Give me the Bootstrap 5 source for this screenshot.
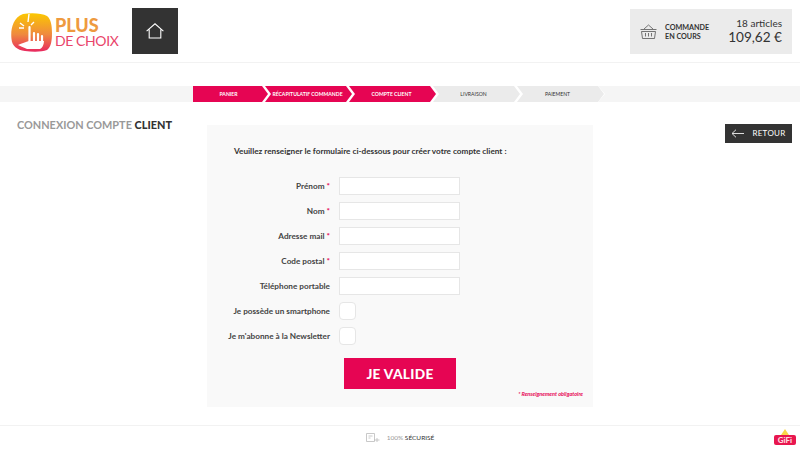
<!DOCTYPE html>
<html lang="fr">
<head>
    <meta charset="UTF-8">
    <meta name="viewport" content="width=device-width, initial-scale=1.0">
    <title>Plus de choix</title>
    <link rel="stylesheet" href="https://cdn.jsdelivr.net/npm/bootstrap@5.3.3/dist/css/bootstrap.min.css">
    <style>
        body { font-family: Lato, "Liberation Sans", sans-serif; color: #333; background: #fff; overflow: hidden; }
        .top-head { height: 63px; border-bottom: 1px solid #f2f2f2; padding: 8px 8px 0 11px; }
        .logo-icon { margin-top: 5px; }
        .logo-words { margin-left: 3px; margin-top: 8px; width: 77px; }
        .logo-plus { font-size: 18px; font-weight: 900; line-height: 18px; color: #ee9a3f; }
        .logo-choix { font-size: 14px; line-height: 14px; color: #e9446a; letter-spacing: -.4px; white-space: nowrap; }
        .home-btn { width: 46px; height: 46px; background: #333; }
        .cart-box { width: 162px; height: 45px; margin-top: 1px; background: #ebebeb; padding: 0 10px; }
        .cart-label { font-size: 7.2px; line-height: 9px; font-weight: 700; margin-left: 8px; color: #333; }
        .cart-count { font-size: 10px; line-height: 12px; }
        .cart-total { font-size: 13.6px; line-height: 17px; }
        .steps-bar { height: 16px; margin-top: 23px; }
        .bar-start { width: 193px; background: #f5f5f5; }
        .bar-end { flex: 1; margin-left: -3px; background: #f5f5f5; clip-path: polygon(0 0, 100% 0, 100% 100%, 0 100%, 7px 50%); }
        .step-item { width: 87px; margin-right: -3px; font-size: 5.1px; line-height: 16px; text-align: center; padding-right: 2px; text-transform: uppercase;
            clip-path: polygon(0 0, calc(100% - 6px) 0, 100% 50%, calc(100% - 6px) 100%, 0 100%, 6px 50%); }
        .step-item.first-step { width: 75px; padding-right: 4px; clip-path: polygon(0 0, calc(100% - 6px) 0, 100% 50%, calc(100% - 6px) 100%, 0 100%); }
        .step-done { background: #e60553; color: #fff; font-weight: 700; }
        .step-todo { background: #ebebeb; color: #333; padding-right: 6px; }
        .page-main { height: 323px; }
        .side-title { width: 207px; padding: 16px 0 0 17px; font-size: 10.9px; line-height: 14px; font-weight: 700; color: #999; }
        .side-title b { color: #333; }
        .form-panel { width: 386px; height: 282px; margin-top: 23px; background: #f9f9f9; padding: 20px 10px 0 0; }
        .form-intro { font-size: 8.2px; line-height: 12px; font-weight: 700; padding-left: 27px; margin-bottom: 20px; }
        .form-line { height: 18px; margin-bottom: 7px; }
        .form-line label { width: 125px; padding-right: 2px; text-align: right; font-size: 8.2px; font-weight: 700; color: #444; margin: 0 7px 0 0; white-space: nowrap; }
        .form-line label span { color: #e60553; }
        .field-text { width: 121px; height: 18px; background: #fff; border: 1px solid #e6e6e6; }
        .field-check { width: 17px; height: 18px; background: #fff; border: 1px solid #e6e6e6; border-radius: 4px; }
        .submit-btn { width: 112px; height: 31px; margin: 13px 0 0 137px; background: #e60553; color: #fff; font-size: 13.7px; font-weight: 900; line-height: 31px; border: 0; border-radius: 0; padding: 0; letter-spacing: .3px; }
        .submit-btn:hover { background: #e60553; color: #fff; }
        .need-note { font-size: 5.5px; font-style: italic; font-weight: 700; color: #e60553; text-align: right; margin-top: 1px; line-height: 8px; }
        .back-wrap { flex: 1; padding: 22px 8px 0 0; }
        .back-btn { width: 67px; height: 19px; background: #333; color: #fff; font-size: 8px; line-height: 19px; border: 0; border-radius: 0; padding: 0; letter-spacing: .3px; gap: 8px; }
        .back-btn:hover { background: #333; color: #fff; }
        .page-foot { height: 25px; border-top: 1px solid #f2f2f2; }
        .safe-text { font-size: 6.5px; margin-left: 7px; color: #333; }
        .safe-text em { font-style: normal; color: #999; }
        .gifi-mark { right: 4px; bottom: 5px; }
    </style>
</head>
<body>
    <header class="top-head d-flex align-items-start">
        <svg class="logo-icon" width="41" height="39" viewBox="0 0 41 39">
            <defs>
                <linearGradient id="logoGrad" x1="0" y1="0" x2="0" y2="1">
                    <stop offset="0" stop-color="#fbc800"/>
                    <stop offset=".55" stop-color="#ef8a3f"/>
                    <stop offset="1" stop-color="#e8285f"/>
                </linearGradient>
            </defs>
            <path d="M12 1C20-.5 31 0 36 3c4 3 5 10 5 17 0 8-1 14-5 17-5 2-14 2-22 1C6 37 1 33 .5 26-.5 18 1 5 12 1z" fill="url(#logoGrad)"/>
            <path d="M7 32c4-2 8-3 11-4h15c0 4-2 7-4 8H16c-4-2-7-3-9-4z" fill="#fff"/>
            <path d="M18.500 14v16M23 20v10M27 21v9M31 23v7" stroke="#fff" stroke-width="2.200" stroke-linecap="round"/>
            <path d="M18 1l-1 8M9 10l4 3M8 15h5M20 12l3-3" stroke="#fff" stroke-width="1.400" fill="none"/>
        </svg>
        <div class="logo-words">
            <div class="logo-plus">PLUS</div>
            <div class="logo-choix">DE CHOIX</div>
        </div>
        <a class="home-btn d-flex align-items-center justify-content-center" href="#">
            <svg width="18" height="16" viewBox="0 0 18 16" fill="none" stroke="#fff" stroke-width="1.1">
                <path d="M.6 8.2L9 .8l8.4 7.4M3.2 6.4V15h11.6V6.4"/>
            </svg>
        </a>
        <div class="cart-box ms-auto d-flex align-items-center">
            <svg width="17" height="15" viewBox="0 0 17 15" fill="none" stroke="#555" stroke-width=".8">
                <path d="M.5 5.5h16M1.5 7.5h14l-1 7h-12zM4 5l4.500-4 4.500 4M5.500 9v3.500M8.500 9v3.500M11.500 9v3.500"/>
            </svg>
            <div class="cart-label">COMMANDE<br>EN COURS</div>
            <div class="ms-auto text-end">
                <div class="cart-count">18 articles</div>
                <div class="cart-total">109,62 €</div>
            </div>
        </div>
    </header>

    <div class="steps-bar d-flex">
        <div class="bar-start"></div>
        <div class="step-item first-step step-done">Panier</div>
        <div class="step-item step-done">Récapitulatif commande</div>
        <div class="step-item step-done">Compte client</div>
        <div class="step-item step-todo">Livraison</div>
        <div class="step-item step-todo">Paiement</div>
        <div class="bar-end"></div>
    </div>

    <main class="page-main d-flex">
        <div class="side-title">CONNEXION COMPTE <b>CLIENT</b></div>
        <form class="form-panel">
            <p class="form-intro">Veuillez renseigner le formulaire ci-dessous pour créer votre compte client :</p>
            <div class="form-line d-flex align-items-center"><label>Prénom <span>*</span></label><input class="field-text" type="text"></div>
            <div class="form-line d-flex align-items-center"><label>Nom <span>*</span></label><input class="field-text" type="text"></div>
            <div class="form-line d-flex align-items-center"><label>Adresse mail <span>*</span></label><input class="field-text" type="text"></div>
            <div class="form-line d-flex align-items-center"><label>Code postal <span>*</span></label><input class="field-text" type="text"></div>
            <div class="form-line d-flex align-items-center"><label>Téléphone portable</label><input class="field-text" type="text"></div>
            <div class="form-line d-flex align-items-center"><label>Je possède un smartphone</label><div class="field-check"></div></div>
            <div class="form-line d-flex align-items-center"><label>Je m'abonne à la Newsletter</label><div class="field-check"></div></div>
            <button class="btn submit-btn d-block" type="button">JE VALIDE</button>
            <div class="need-note">* Renseignement obligatoire</div>
        </form>
        <div class="back-wrap d-flex justify-content-end align-items-start">
            <a class="btn back-btn d-flex align-items-center justify-content-center" href="#">
                <svg width="13" height="9" viewBox="0 0 13 9" fill="none" stroke="#ddd" stroke-width="1">
                    <path d="M13 4.500H1M5 .7L1 4.500l4 3.800"/>
                </svg>
                <span>RETOUR</span>
            </a>
        </div>
    </main>

    <footer class="page-foot position-relative d-flex align-items-center justify-content-center">
        <svg width="14" height="10" viewBox="0 0 14 10" fill="none" stroke="#bbb" stroke-width=".8">
            <path d="M.5.500h8v8h-8zM2.500 3h4M2.500 5h2M8 7h5.500M11 5v4"/>
        </svg>
        <span class="safe-text"><em>100%</em> SÉCURISÉ</span>
        <svg class="gifi-mark position-absolute" width="22" height="16" viewBox="0 0 22 16">
            <path d="M11 0l6 9H5z" fill="#f9d949"/>
            <rect x="0" y="6" width="22" height="10" rx="2" fill="#e8174f"/>
            <text x="11" y="14" font-family="Lato, sans-serif" font-size="8" font-weight="900" fill="#ffd9df" text-anchor="middle">GiFi</text>
        </svg>
    </footer>
    <script src="https://cdn.jsdelivr.net/npm/bootstrap@5.3.3/dist/js/bootstrap.bundle.min.js"></script>
</body>
</html>
